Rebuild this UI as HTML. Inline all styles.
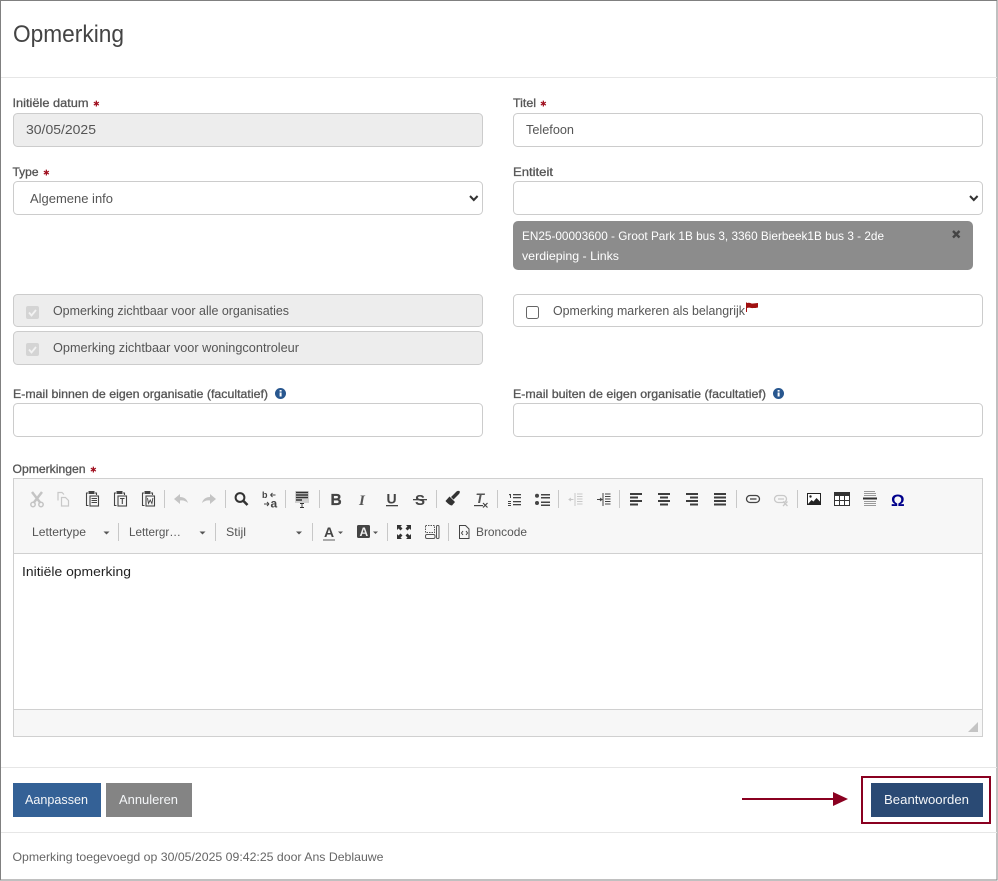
<!DOCTYPE html>
<html lang="nl"><head><meta charset="utf-8"><title>Opmerking</title>
<style>
html,body{margin:0;padding:0;background:#fff;width:998px;height:881px;overflow:hidden}
svg{display:block}
text{font-family:"Liberation Sans",sans-serif;white-space:pre}
.l{font-size:12px;fill:#555;stroke:#555;stroke-width:.3}
.t{font-size:13px;fill:#555}
.tb{font-size:12px;fill:#555}
.s{font-family:"DejaVu Sans",sans-serif;font-size:8px;fill:#a01020}
.b{font-size:13px;fill:#f4f6f8}
.f{fill:#fff;stroke:#ccc}
.d{fill:#ededed;stroke:#ccc}
.sep{fill:#c8c8c8}
</style></head><body>
<svg width="998" height="881" viewBox="0 0 998 881" xmlns="http://www.w3.org/2000/svg">
<rect x=".5" y=".5" width="996.5" height="879.5" fill="#fff" stroke="#808080"/>
<rect x="1" y="77" width="996" height="1" fill="#e6e6e6"/>
<rect x="1" y="767" width="996" height="1" fill="#e6e6e6"/>
<rect x="1" y="832" width="996" height="1" fill="#e6e6e6"/>
<text x="13" y="42" font-size="24" fill="#444" textLength="111" lengthAdjust="spacingAndGlyphs">Opmerking</text>

<text class="l" x="12.500" y="107" textLength="76" lengthAdjust="spacingAndGlyphs">Initiële datum</text><text class="s" x="93" y="106.500">✱</text>
<text class="l" x="513" y="107" textLength="23" lengthAdjust="spacingAndGlyphs">Titel</text><text class="s" x="540" y="106.500">✱</text>
<rect class="d" x="13.5" y="113.5" width="469" height="33" rx="4"/>
<text class="t" x="26" y="134" textLength="70" lengthAdjust="spacingAndGlyphs">30/05/2025</text>
<rect class="f" x="513.5" y="113.5" width="469" height="33" rx="4"/>
<text class="t" x="526" y="134" textLength="48" lengthAdjust="spacingAndGlyphs">Telefoon</text>

<text class="l" x="12.500" y="176" textLength="26" lengthAdjust="spacingAndGlyphs">Type</text><text class="s" x="43" y="175.500">✱</text>
<text class="l" x="513" y="176" textLength="40" lengthAdjust="spacingAndGlyphs">Entiteit</text>
<rect class="f" x="13.5" y="181.5" width="469" height="33" rx="4"/>
<text class="t" x="30" y="203" textLength="83" lengthAdjust="spacingAndGlyphs">Algemene info</text>
<path d="M470 196l3.800 4 3.800-4" fill="none" stroke="#333" stroke-width="2"/>
<rect class="f" x="513.5" y="181.5" width="469" height="33" rx="4"/>
<path d="M970 196l3.800 4 3.800-4" fill="none" stroke="#333" stroke-width="2"/>

<rect x="513" y="221" width="460" height="49" rx="5" fill="#8c8c8c"/>
<text x="522" y="240" font-size="12" fill="#fff" textLength="362" lengthAdjust="spacingAndGlyphs">EN25-00003600 - Groot Park 1B bus 3, 3360 Bierbeek1B bus 3 - 2de</text>
<text x="522" y="260" font-size="12" fill="#fff" textLength="97" lengthAdjust="spacingAndGlyphs">verdieping - Links</text>
<path d="M953 231l6.500 6.500M959.500 231l-6.500 6.500" stroke="#444" stroke-width="2.400"/>

<rect class="d" x="13.5" y="294.500" width="469" height="32" rx="4"/>
<rect x="26" y="306" width="13" height="13" rx="2" fill="#d4d4d4"/><path d="M29 312.500l2.500 3 4.500-5.500" fill="none" stroke="#f2f2f2" stroke-width="1.800"/>
<text class="t" x="53" y="315" textLength="236" lengthAdjust="spacingAndGlyphs">Opmerking zichtbaar voor alle organisaties</text>
<rect class="d" x="13.5" y="331.500" width="469" height="33" rx="4"/>
<rect x="26" y="343" width="13" height="13" rx="2" fill="#d4d4d4"/><path d="M29 349.500l2.500 3 4.500-5.500" fill="none" stroke="#f2f2f2" stroke-width="1.800"/>
<text class="t" x="53" y="352" textLength="246" lengthAdjust="spacingAndGlyphs">Opmerking zichtbaar voor woningcontroleur</text>
<rect class="f" x="513.5" y="294.500" width="469" height="32" rx="4"/>
<rect x="526.500" y="306.500" width="12" height="12" rx="2" fill="#fff" stroke="#666"/>
<text class="t" x="553" y="315" textLength="192" lengthAdjust="spacingAndGlyphs">Opmerking markeren als belangrijk</text>
<path d="M746 302.500h1v9.500h-1z" fill="#a01010"/><path d="M747 303c3-1 4 1 6 .500 2 0 3-.5 5-.5v4.500c-2 .5-3 .5-5 .5-2 .5-3-1-6 0z" fill="#a01010"/>

<text class="l" x="13" y="398" textLength="255" lengthAdjust="spacingAndGlyphs">E-mail binnen de eigen organisatie (facultatief)</text>
<circle cx="280.500" cy="393.500" r="5.500" fill="#28578f"/><rect x="279.600" y="392.500" width="2" height="4" fill="#fff"/><rect x="279.600" y="390" width="2" height="1.600" fill="#fff"/>
<text class="l" x="513" y="398" textLength="253" lengthAdjust="spacingAndGlyphs">E-mail buiten de eigen organisatie (facultatief)</text>
<circle cx="778.500" cy="393.500" r="5.500" fill="#28578f"/><rect x="777.600" y="392.500" width="2" height="4" fill="#fff"/><rect x="777.600" y="390" width="2" height="1.600" fill="#fff"/>
<rect class="f" x="13.5" y="403.500" width="469" height="33" rx="4"/>
<rect class="f" x="513.5" y="403.500" width="469" height="33" rx="4"/>

<text class="l" x="12.500" y="473" textLength="73" lengthAdjust="spacingAndGlyphs">Opmerkingen</text><text class="s" x="90" y="472.500">✱</text>

<rect x="13.500" y="478.500" width="969" height="258" fill="#f7f7f7" stroke="#d0d0d0"/>
<rect x="14" y="553" width="968" height="157" fill="#fff"/>
<rect x="14" y="553" width="968" height="1" fill="#d0d0d0"/>
<rect x="14" y="709" width="968" height="1" fill="#d0d0d0"/>
<text x="22" y="576" font-size="13" fill="#222" textLength="109" lengthAdjust="spacingAndGlyphs">Initiële opmerking</text>
<path d="M978 722v10h-10z" fill="#c4c4c4"/>

<!-- separators -->
<g class="sep">
<rect x="164" y="490" width="1" height="18"/><rect x="225" y="490" width="1" height="18"/><rect x="285" y="490" width="1" height="18"/><rect x="319" y="490" width="1" height="18"/><rect x="436" y="490" width="1" height="18"/><rect x="497" y="490" width="1" height="18"/><rect x="558" y="490" width="1" height="18"/><rect x="619" y="490" width="1" height="18"/><rect x="736" y="490" width="1" height="18"/><rect x="797" y="490" width="1" height="18"/>
<rect x="118" y="523" width="1" height="18"/><rect x="215" y="523" width="1" height="18"/><rect x="312" y="523" width="1" height="18"/><rect x="387" y="523" width="1" height="18"/><rect x="448" y="523" width="1" height="18"/>
</g>

<!-- cut -->
<g fill="none" stroke="#c4c4c4"><path d="M32 492l8.500 11M42 492l-8.500 11" stroke-width="2.500"/><circle cx="33" cy="504.500" r="2.200" stroke-width="1.500"/><circle cx="41" cy="504.500" r="2.200" stroke-width="1.500"/></g>
<!-- copy -->
<g fill="none" stroke="#c8c8c8" stroke-width="1.200"><path d="M58 500.500v-8h4l2 2"/><path d="M61.500 497.500h4l3 3v5.500h-7z"/></g>
<!-- paste variants -->
<g fill="none" stroke="#444">
<path d="M88 493h-1.500v12.500h2M95 493h1.500v2" stroke-width="1.100"/><rect x="88.500" y="491" width="6" height="3" fill="#444" stroke="none"/><rect x="90" y="496" width="8.500" height="10" fill="#f7f7f7" stroke-width="1.100"/><path d="M91.500 498.500h5.500M91.500 500.500h5.500M91.500 502.500h5.500" stroke-width="1"/>
<path d="M116 493h-1.500v12.500h2M123 493h1.500v2" stroke-width="1.100"/><rect x="116.500" y="491" width="6" height="3" fill="#444" stroke="none"/><rect x="118" y="496" width="8.500" height="10" fill="#f7f7f7" stroke-width="1.100"/><path d="M120 498.500h4.500M122.300 498.500v5.500" stroke-width="1.100"/>
<path d="M144 493h-1.500v12.500h2M151 493h1.500v2" stroke-width="1.100"/><rect x="144.500" y="491" width="6" height="3" fill="#444" stroke="none"/><rect x="146" y="496" width="8.500" height="10" fill="#f7f7f7" stroke-width="1.100"/><path d="M147.500 498l1 5.500 1.700-3.500 1.700 3.500 1-5.500" stroke-width=".9"/>
</g>
<!-- undo / redo -->
<path d="M174 499l6-5v3c4 0 7 2 8 6-2-2-5-3-8-2.500v3.500z" fill="#c4c4c4"/>
<path d="M216 499l-6-5v3c-4 0-7 2-8 6 2-2 5-3 8-2.500v3.500z" fill="#c4c4c4"/>
<!-- find -->
<circle cx="240" cy="497.500" r="4.400" fill="none" stroke="#333" stroke-width="2"/><path d="M243.500 501l4 4" stroke="#333" stroke-width="2.600"/>
<!-- replace -->
<text x="262" y="498" font-size="9" font-weight="700" fill="#444">b</text><text x="270.500" y="507.500" font-size="12" font-weight="700" fill="#444">a</text>
<path d="M275.500 495h-5M270.500 495l2-2M270.500 495l2 2M264 504h5M269 504l-2-2M269 504l-2 2" fill="none" stroke="#444" stroke-width="1"/>
<!-- select all -->
<rect x="295" y="491" width="14" height="12" fill="#d0d0d0"/><path d="M296 492.500h12M296 495h12M296 497.500h12M296 500h6" stroke="#333" stroke-width="1.400"/><path d="M300 503.500h4M302 503.500v4M300 507.500h4" stroke="#333" stroke-width=".9" fill="none"/>
<!-- B I U S -->
<text x="330.500" y="505" font-size="15.500" font-weight="700" fill="#444" stroke="#444" stroke-width=".3">B</text>
<text x="359" y="505" font-size="15" font-weight="700" font-style="italic" style="font-family:'Liberation Serif',serif" fill="#555">I</text>
<text x="386.500" y="503.500" font-size="14" font-weight="700" fill="#444">U</text><rect x="386" y="505" width="12" height="1.300" fill="#444"/>
<text x="415" y="505" font-size="15" font-weight="700" fill="#444">S</text><rect x="413" y="499" width="14" height="1.300" fill="#444"/>
<!-- brush -->
<path d="M451 497l5-5c1.500-1.500 2.500-1 3.500-1 .5 1 .5 2-1 3.500l-5 5z" fill="#333"/><path d="M445.500 501l4-4.500 5.500 5.500-3 3.500c-2 0-5-2.500-6.500-4.500z" fill="#333"/>
<!-- remove format -->
<text x="475.500" y="503" font-size="14" font-weight="700" font-style="italic" fill="#555">T</text><rect x="474" y="505" width="9" height="1.200" fill="#444"/><path d="M483 503l4.500 4.500M487.500 503l-4.500 4.500" stroke="#444" stroke-width="1.200"/>
<!-- lists -->
<g fill="#444">
<rect x="513" y="494" width="8" height="1.300"/><rect x="513" y="497" width="8" height="1.300"/><rect x="513" y="501" width="8" height="1.300"/><rect x="513" y="504" width="8" height="1.300"/>
<rect x="509" y="494" width="2" height="1.200"/><rect x="510" y="494" width="1" height="4"/><rect x="508" y="501" width="3" height="1"/><rect x="508" y="503" width="3" height="1"/><rect x="508" y="505" width="3" height="1"/>
<rect x="541" y="494" width="9" height="1.500"/><rect x="541" y="497" width="9" height="1.500"/><rect x="541" y="501.500" width="9" height="1.500"/><rect x="541" y="504.500" width="9" height="1.500"/>
<circle cx="537" cy="495.800" r="2"/><circle cx="537" cy="503" r="2"/>
</g>
<!-- outdent / indent -->
<g fill="none" stroke="#c8c8c8" stroke-width="1"><path d="M575 493v13M577 494h5.500M577 496.500h5.500M577 499h5.500M577 501.500h5.500M577 504h5.500M573.500 499.500h-4M571 498l-2 1.500 2 1.500"/></g>
<g fill="none" stroke="#444" stroke-width="1"><path d="M603 493v13M605 494h5.500M605 496.500h5.500M605 499h5.500M605 501.500h5.500M605 504h5.500M597 499.500h4.500M600 498l2 1.500-2 1.500"/></g>
<!-- align -->
<g fill="#3c3c3c">
<rect x="630" y="493" width="12" height="2"/><rect x="630" y="496.500" width="8" height="2"/><rect x="630" y="500" width="12" height="2"/><rect x="630" y="503.500" width="8" height="2"/>
<rect x="658" y="493" width="12" height="2"/><rect x="660" y="496.500" width="8" height="2"/><rect x="658" y="500" width="12" height="2"/><rect x="660" y="503.500" width="8" height="2"/>
<rect x="686" y="493" width="12" height="2"/><rect x="690" y="496.500" width="8" height="2"/><rect x="686" y="500" width="12" height="2"/><rect x="690" y="503.500" width="8" height="2"/>
<rect x="714" y="493" width="12" height="2"/><rect x="714" y="496.500" width="12" height="2"/><rect x="714" y="500" width="12" height="2"/><rect x="714" y="503.500" width="12" height="2"/>
</g>
<!-- link / unlink -->
<g fill="none" stroke="#444" stroke-width="1.300"><rect x="746.500" y="495.500" width="13" height="7" rx="3.500"/><path d="M750 499h6.500"/></g>
<g fill="none" stroke="#c8c8c8" stroke-width="1.300"><rect x="774.500" y="495.500" width="12" height="7" rx="3.500"/><path d="M778 499h6M783 501.500l4.500 4.500M787.500 501.500l-4.500 4.500"/></g>
<!-- image -->
<rect x="807.500" y="493.500" width="13" height="11" fill="#fff" stroke="#222"/><circle cx="810.500" cy="496.500" r="1.200" fill="#222"/><path d="M808 504l3.500-4 2 1.500 3-3.500 3.500 3.500v2.500z" fill="#222"/>
<!-- table -->
<rect x="834.500" y="492.500" width="15" height="13" fill="#fff" stroke="#333"/><rect x="834" y="492" width="16" height="4" fill="#333"/><path d="M839.500 496v9M844.500 496v9M835 500.500h14" stroke="#333" fill="none"/>
<!-- hr -->
<g fill="#999"><rect x="864" y="491" width="11" height="1"/><rect x="864" y="493" width="12" height="1"/><rect x="864" y="495" width="12" height="1"/><rect x="864" y="501" width="12" height="1"/><rect x="864" y="503" width="12" height="1"/><rect x="864" y="505" width="12" height="1"/></g><rect x="863" y="497.500" width="14" height="2" fill="#333"/>
<!-- omega -->
<text x="891" y="506" font-size="17" font-weight="700" fill="#00008b">Ω</text>

<!-- row 2 -->
<text class="tb" x="32" y="536" textLength="54" lengthAdjust="spacingAndGlyphs">Lettertype</text>
<path d="M103.500 531.500h6l-3 3z" fill="#555"/>
<text class="tb" x="129" y="536" textLength="52" lengthAdjust="spacingAndGlyphs">Lettergr…</text>
<path d="M199.500 531.500h6l-3 3z" fill="#555"/>
<text class="tb" x="226" y="536" textLength="20" lengthAdjust="spacingAndGlyphs">Stijl</text>
<path d="M296 531.500h6l-3 3z" fill="#555"/>
<text x="324" y="537" font-size="14" font-weight="700" fill="#444">A</text><rect x="323" y="539" width="12" height="2" fill="#aaa"/>
<path d="M338 531.500h5l-2.500 2.500z" fill="#555"/>
<rect x="357" y="525" width="13" height="13" rx="1.500" fill="#444"/><text x="359.500" y="536" font-size="12" font-weight="700" fill="#eee">A</text>
<path d="M373 531.500h5l-2.500 2.500z" fill="#555"/>
<!-- maximize -->
<g fill="#333"><path d="M397 525h5l-1.500 1.500 2 2-2 2-2-2-1.500 1.500zM411 525h-5l1.500 1.500-2 2 2 2 2-2 1.500 1.500zM397 539h5l-1.500-1.500 2-2-2-2-2 2-1.500-1.500zM411 539h-5l1.500-1.500-2-2 2-2 2 2 1.500-1.500z"/></g>
<!-- blocks -->
<g fill="none" stroke="#555"><path d="M425.500 525.500h9v7h-9z" stroke-dasharray="1.500 1"/><rect x="425.500" y="534.500" width="9.500" height="4" rx="1.500"/><rect x="436.500" y="525.500" width="2.500" height="13" rx="1"/></g>
<!-- source -->
<path d="M459.500 525.500h6l3.500 3.500v9.500h-9.500z" fill="none" stroke="#444"/><path d="M463 531l-1.500 2 1.500 2M466 531l1.500 2-1.500 2" fill="none" stroke="#444"/>
<text class="tb" x="476" y="536" textLength="51" lengthAdjust="spacingAndGlyphs">Broncode</text>

<!-- buttons -->
<rect x="13" y="783" width="88" height="34" fill="#346196"/>
<text class="b" x="25" y="804" textLength="63" lengthAdjust="spacingAndGlyphs">Aanpassen</text>
<rect x="106" y="783" width="86" height="34" fill="#848484"/>
<text class="b" x="119" y="804" textLength="59" lengthAdjust="spacingAndGlyphs">Annuleren</text>
<rect x="871" y="783" width="112" height="34" fill="#2a4a74"/>
<text class="b" x="884" y="804" textLength="85" lengthAdjust="spacingAndGlyphs">Beantwoorden</text>
<rect x="862" y="777" width="128" height="46" fill="none" stroke="#8a0020" stroke-width="2"/>
<rect x="742" y="798" width="92" height="2" fill="#8a0020"/>
<path d="M833 792l15 7-15 7z" fill="#8a0020"/>

<text x="12.500" y="861" font-size="12" fill="#666" textLength="371" lengthAdjust="spacingAndGlyphs">Opmerking toegevoegd op 30/05/2025 09:42:25 door Ans Deblauwe</text>
</svg>
</body></html>
